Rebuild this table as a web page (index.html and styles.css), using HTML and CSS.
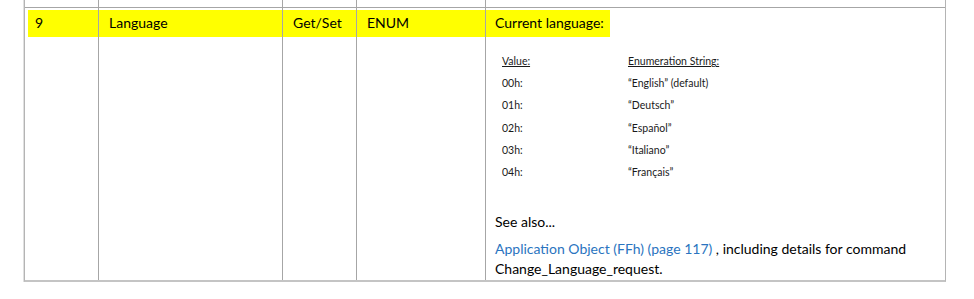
FILE: index.html
```html
<!DOCTYPE html>
<html>
<head>
<meta charset="utf-8">
<link rel="stylesheet" href="styles.css">
</head>
<body>
<div class="tbl">
  <div class="row prev">
    <div class="cell c1"></div>
    <div class="cell c2"></div>
    <div class="cell c3"></div>
    <div class="cell c4"></div>
    <div class="cell c5"></div>
  </div>
  <div class="row main">
    <div class="cell c1"><div class="hl first">9</div></div>
    <div class="cell c2"><div class="hl">Language</div></div>
    <div class="cell c3"><div class="hl">Get/Set</div></div>
    <div class="cell c4"><div class="hl">ENUM</div></div>
    <div class="cell c5">
      <div class="hl-inline">Current language:</div>
      <div class="enum">
        <div class="ehead">Value:</div><div class="ehead">Enumeration String:</div>
        <div>00h:</div><div>“English” (default)</div>
        <div>01h:</div><div>“Deutsch”</div>
        <div>02h:</div><div>“Español”</div>
        <div>03h:</div><div>“Italiano”</div>
        <div>04h:</div><div>“Français”</div>
      </div>
      <p class="see">See also...</p>
      <p class="ref"><a class="link" href="#">Application Object (FFh) (page 117)</a> , including details for command Change_Language_request.</p>
    </div>
  </div>
</div>
</body>
</html>
```
FILE: styles.css
```css
html, body {
  margin: 0;
  padding: 0;
  background: #ffffff;
}
body {
  font-family: "Lato", "Liberation Sans", sans-serif;
  font-size: 14px;
  color: #000;
}
.tbl {
  margin-left: 24px;
  width: 920px;
  border-left: 1px solid #b4b4b4;
  border-right: 1px solid #b4b4b4;
  border-bottom: 2px solid #c4c4c4;
  box-shadow: -1px 0 0 #e0e0e0;
}
.row {
  display: grid;
  grid-template-columns: 73px 184px 74px 129px 1fr;
}
.prev {
  height: 7px;
  border-bottom: 1px solid #a6a6a6;
}
.main {
  height: 272px;
}
.cell {
  border-left: 1px solid #a6a6a6;
  padding-top: 2px;
}
.cell.c1 {
  border-left: none;
}
.hl {
  background: #ffff00;
  height: 27px;
  line-height: 25px;
  padding-left: 10px;
  box-sizing: border-box;
}
.hl.first {
  margin-left: 3px;
  padding-left: 7px;
}
.hl-inline {
  display: inline-block;
  background: #ffff00;
  height: 27px;
  line-height: 25px;
  padding: 0 6px 0 9px;
}
.enum {
  display: grid;
  grid-template-columns: 126px 1fr;
  grid-auto-rows: 22.2px;
  margin: 13px 0 0 16px;
  font-size: 10.5px;
  line-height: 22px;
  color: #1a1a1a;
}
.ehead {
  text-decoration: underline;
}
.see {
  margin: 29px 0 0 9px;
  line-height: 20px;
}
.ref {
  margin: 7px 24px 0 9px;
  line-height: 20px;
}
.link {
  color: #2a74c0;
  text-decoration: none;
}
```
